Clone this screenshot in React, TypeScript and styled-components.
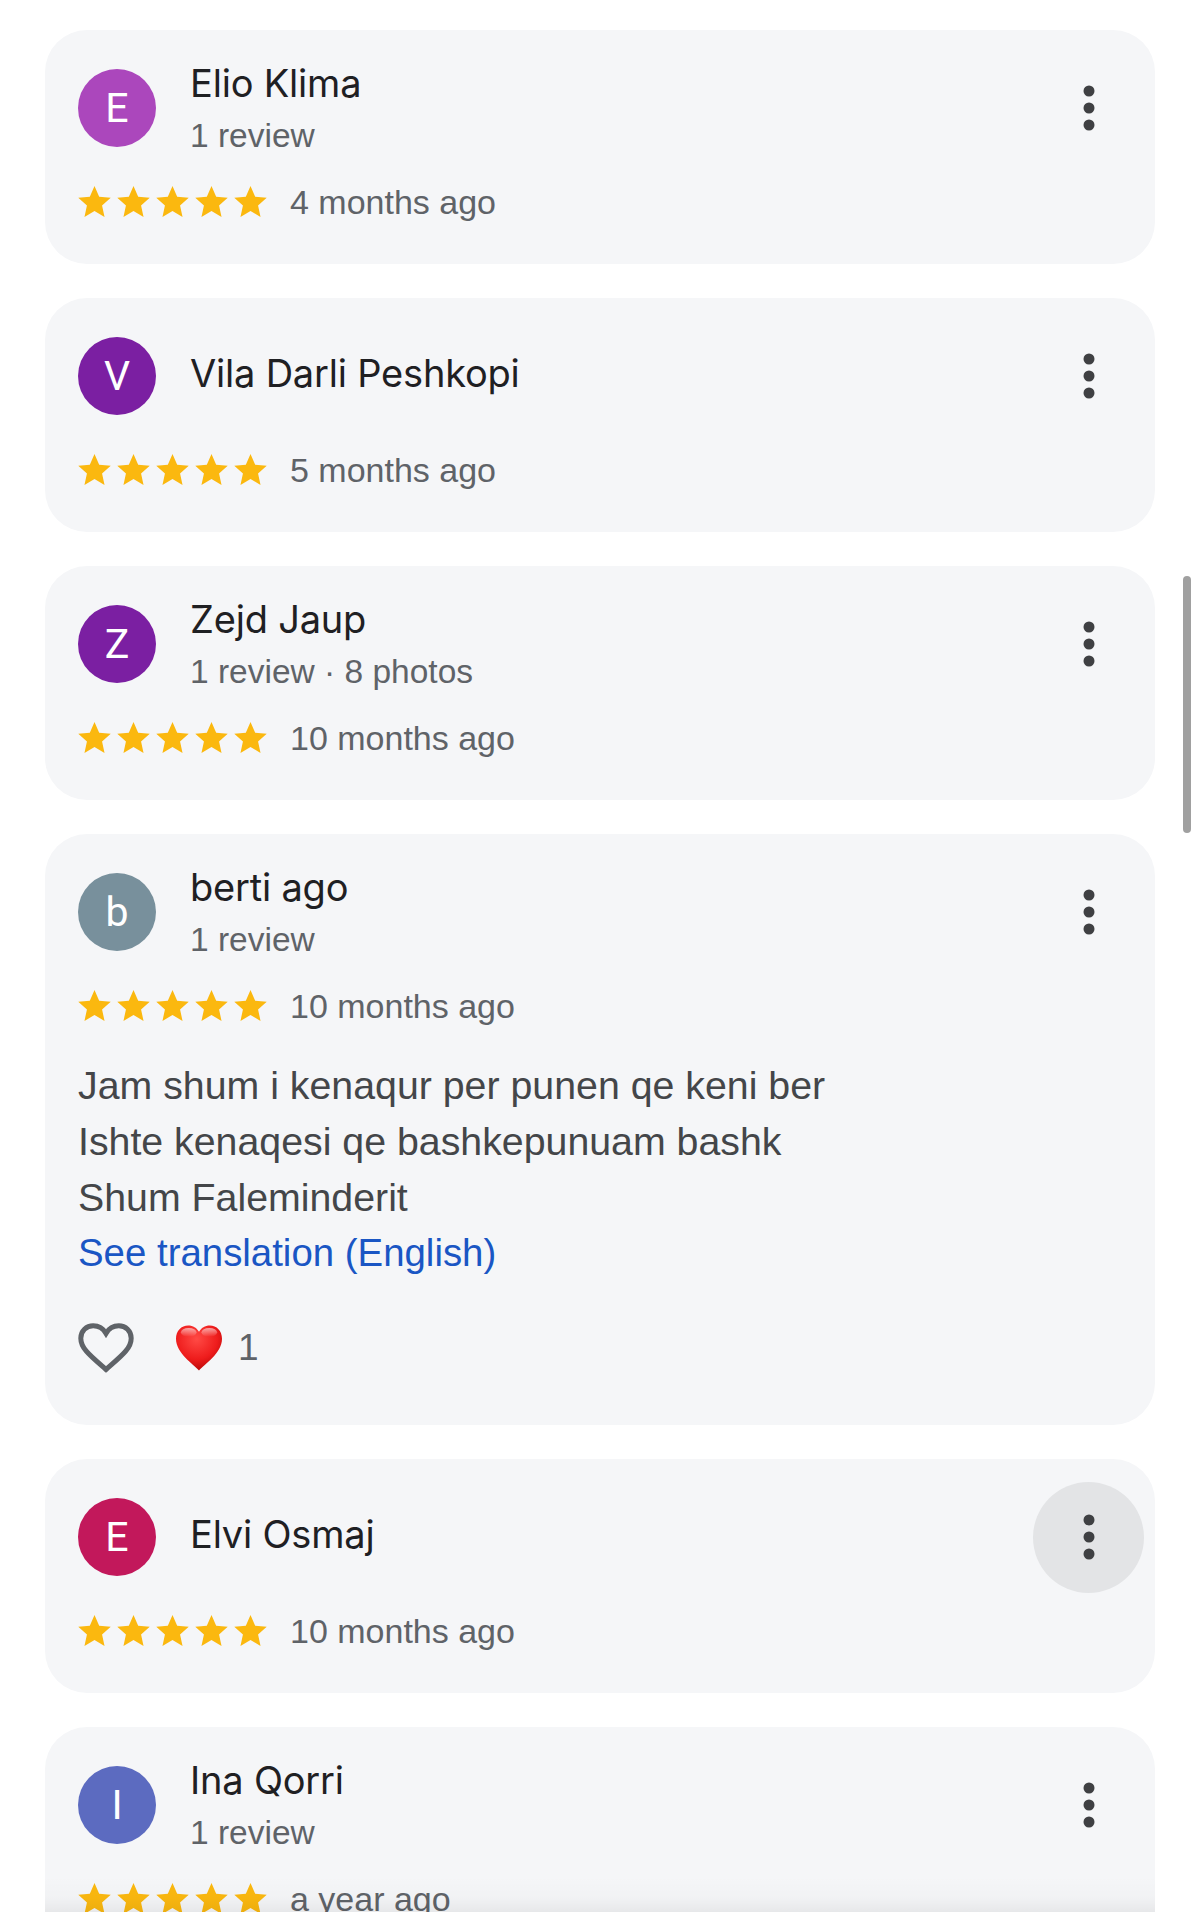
import styled, { createGlobalStyle } from "styled-components"

const GlobalStyle = createGlobalStyle`
  html, body {
    margin: 0;
    padding: 0;
    background: #fff;
  }
`

const reviews = [
  { id: 1, name: "Elio Klima", sub: "1 review", time: "4 months ago", letter: "E", color: "#ab47bc" },
  { id: 2, name: "Vila Darli Peshkopi", time: "5 months ago", letter: "V", color: "#7b1fa2" },
  { id: 3, name: "Zejd Jaup", sub: "1 review · 8 photos", time: "10 months ago", letter: "Z", color: "#7b1fa2" },
  {
    id: 4,
    name: "berti ago",
    sub: "1 review",
    time: "10 months ago",
    letter: "b",
    color: "#78909c",
    text: ["Jam shum i kenaqur per punen qe keni ber", "Ishte kenaqesi qe bashkepunuam bashk", "Shum Faleminderit"],
    likes: 1,
  },
  { id: 5, name: "Elvi Osmaj", time: "10 months ago", letter: "E", color: "#c2185b", pressed: true },
  { id: 6, name: "Ina Qorri", sub: "1 review", time: "a year ago", letter: "I", color: "#5c6bc0" },
]

const Star = () => (
  <StarIcon viewBox="0 0 24 24">
    <path d="M12 .8l3.4 7.7 8.4.8-6.3 5.6 1.8 8.3L12 18.9l-7.3 4.3 1.8-8.3L.2 9.3l8.4-.8z" />
  </StarIcon>
)

const MoreIcon = () => (
  <svg width="12" height="46" viewBox="0 0 12 46" fill="#3f4043">
    <circle cx="6" cy="6" r="5.5" />
    <circle cx="6" cy="23" r="5.5" />
    <circle cx="6" cy="40" r="5.5" />
  </svg>
)

const HeartOutline = () => (
  <svg width="56" height="50" viewBox="0 0 56 50" fill="none" stroke="#5f6368" strokeWidth="5">
    <path d="M28 46.500C12 32.500 2.800 25.500 2.800 15.200 2.800 8 8.400 2.800 15.200 2.800c5.300 0 10 2.800 12.800 7.600 2.800-4.800 7.500-7.600 12.800-7.600 6.800 0 12.400 5.200 12.400 12.400 0 10.300-9.200 17.300-25.200 31.300z" />
  </svg>
)

const HeartEmoji = () => (
  <svg width="46" height="46" viewBox="0 0 47 46">
    <defs>
      <radialGradient id="heartFill" cx="0.45" cy="0.3" r="0.75">
        <stop offset="0" stopColor="#ff4a45" />
        <stop offset="0.6" stopColor="#ee1c1c" />
        <stop offset="1" stopColor="#b00505" />
      </radialGradient>
      <linearGradient id="heartShine" x1="0" y1="0" x2="0" y2="1">
        <stop offset="0" stopColor="#fff" stopOpacity="0.6" />
        <stop offset="1" stopColor="#fff" stopOpacity="0" />
      </linearGradient>
    </defs>
    <path
      fill="url(#heartFill)"
      d="M23.500 46C18 39.500 0 28.500 0 13.500 0 5.500 5.500 0 12.500 0c4.800 0 8.800 2.400 11 6.500C25.700 2.400 29.700 0 34.500 0 41.500 0 47 5.500 47 13.500 47 28.500 29 39.500 23.500 46z"
    />
    <ellipse cx="13" cy="7" rx="8" ry="4.500" fill="url(#heartShine)" />
    <ellipse cx="34" cy="7" rx="8" ry="4.500" fill="url(#heartShine)" />
  </svg>
)

const App = () => {
  return (
    <Page>
      <GlobalStyle />
      {reviews.map((r) => (
        <Card key={r.id}>
          <Head>
            <Avatar $color={r.color}>{r.letter}</Avatar>
            <Author>
              <Name>{r.name}</Name>
              {r.sub && <Sub>{r.sub}</Sub>}
            </Author>
            <MoreButton $pressed={r.pressed}>
              <MoreIcon />
            </MoreButton>
          </Head>
          <Rating>
            <Stars>
              {[0, 1, 2, 3, 4].map((i) => (
                <Star key={i} />
              ))}
            </Stars>
            <Time>{r.time}</Time>
          </Rating>
          {r.text && (
            <Body>
              {r.text.map((line) => (
                <div key={line}>{line}</div>
              ))}
              <Translate>See translation (English)</Translate>
            </Body>
          )}
          {r.likes && (
            <Reactions>
              <HeartOutline />
              <Likes>
                <HeartEmoji />
                <Count>{r.likes}</Count>
              </Likes>
            </Reactions>
          )}
        </Card>
      ))}
      <ScrollThumb />
      <BottomShade />
    </Page>
  )
}

const Page = styled.div`
  position: relative;
  height: 1912px;
  overflow: hidden;
  box-sizing: border-box;
  padding: 30px 45px 0;
  display: flex;
  flex-direction: column;
  gap: 34px;
  background: #fff;
  font-family: "Liberation Sans", Arial, sans-serif;
`

const Card = styled.div`
  flex: none;
  background: #f5f6f8;
  border-radius: 42px;
  padding: 39px 11px 42px 33px;
`

const Head = styled.div`
  display: flex;
  align-items: center;
  height: 78px;
`

const Avatar = styled.div<{ $color: string }>`
  flex: none;
  width: 78px;
  height: 78px;
  border-radius: 50%;
  background: ${(p) => p.$color};
  color: #fff;
  display: flex;
  align-items: center;
  justify-content: center;
  font-family: Roboto, sans-serif;
  font-size: 41px;
`

const Author = styled.div`
  flex: 1;
  margin-left: 34px;
  margin-top: -6px;
`

const Name = styled.div`
  font-family: Inter, sans-serif;
  font-size: 38px;
  line-height: 52px;
  letter-spacing: -0.2px;
  color: #1f2023;
`

const Sub = styled.div`
  margin: 1px 0 -8px;
  font-size: 33.5px;
  line-height: 52px;
  color: #5f6368;
`

const MoreButton = styled.div<{ $pressed?: boolean }>`
  flex: none;
  width: 111px;
  height: 111px;
  margin: -17px 0;
  border-radius: 50%;
  display: flex;
  align-items: center;
  justify-content: center;
  background: ${(p) => (p.$pressed ? "#e3e4e6" : "transparent")};
`

const Rating = styled.div`
  display: flex;
  align-items: center;
  height: 40px;
  margin-top: 34px;
  margin-bottom: 1px;
`

const Stars = styled.div`
  display: flex;
  gap: 6px;
`

const StarIcon = styled.svg`
  display: block;
  width: 33px;
  height: 33px;
  fill: #fbb80f;
`

const Time = styled.div`
  margin-left: 23px;
  padding-top: 3px;
  font-size: 34px;
  color: #5f6368;
`

const Body = styled.div`
  margin-top: 32px;
  font-size: 39.3px;
  line-height: 56px;
  color: #444649;
`

const Translate = styled.div`
  font-size: 38.4px;
  color: #1a56c4;
`

const Reactions = styled.div`
  display: flex;
  align-items: center;
  height: 54px;
  margin-top: 40px;
  margin-bottom: 8px;
`

const Likes = styled.div`
  display: flex;
  align-items: center;
  margin-left: 42px;
`

const Count = styled.span`
  margin-left: 16px;
  font-size: 37px;
  color: #5f6368;
`

const ScrollThumb = styled.div`
  position: absolute;
  left: 1183px;
  top: 576px;
  width: 8px;
  height: 257px;
  border-radius: 4px;
  background: #a0a0a0;
`

const BottomShade = styled.div`
  position: absolute;
  left: 45px;
  right: 45px;
  bottom: 0;
  height: 36px;
  background: linear-gradient(to bottom, rgba(0, 0, 0, 0), rgba(0, 0, 0, 0.015) 60%, rgba(0, 0, 0, 0.06));
`

export default App
